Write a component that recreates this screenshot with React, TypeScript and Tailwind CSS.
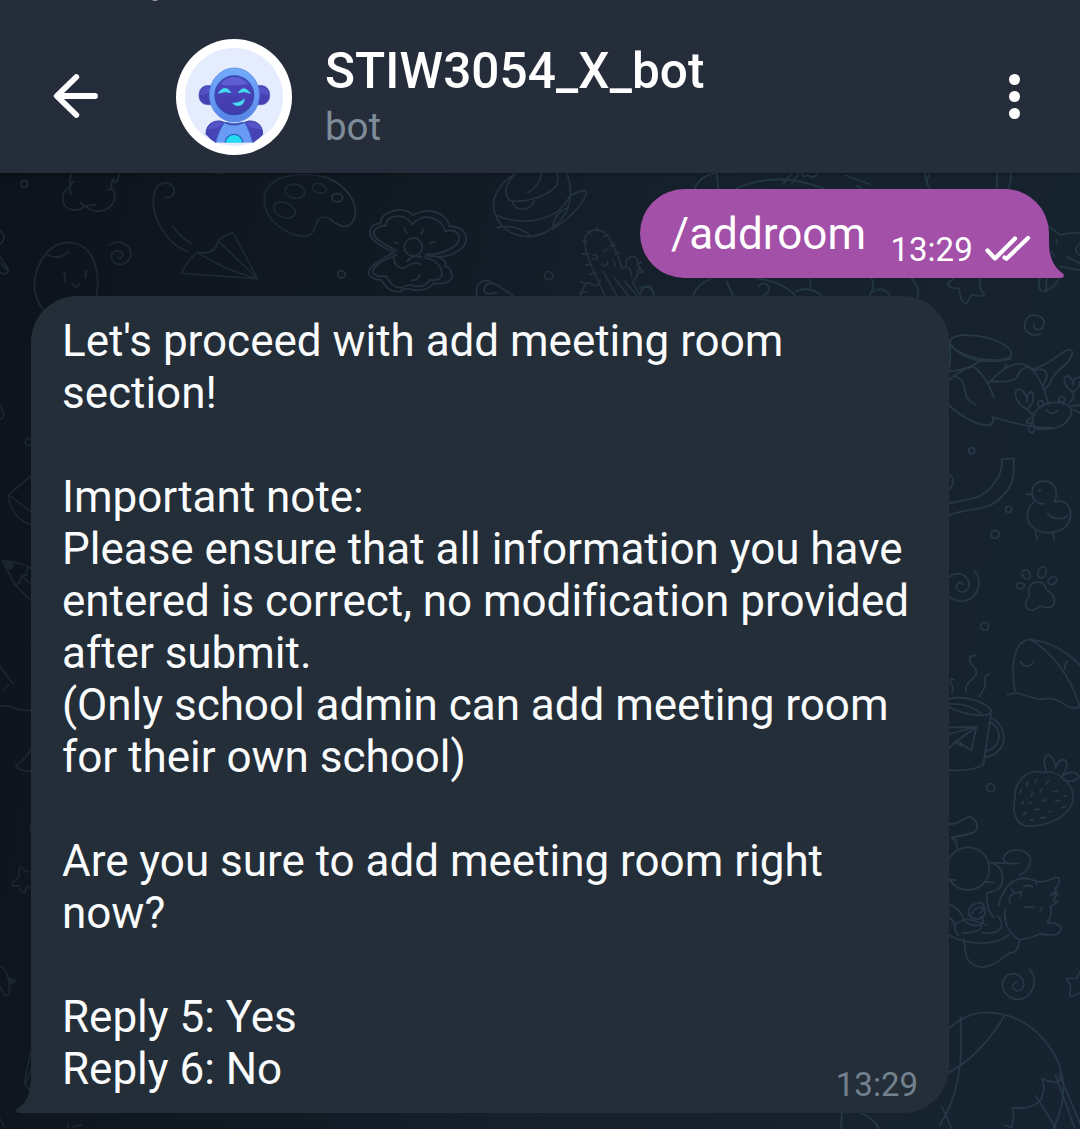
import React from "react";

function Wallpaper() {
  return (
    <svg
      className="absolute inset-0 h-full w-full"
      viewBox="0 0 1080 1129"
      fill="none"
      stroke="#263746"
      strokeWidth="5.4"
      strokeLinecap="round"
      strokeLinejoin="round"
      aria-hidden="true"
    >
      {/* top left: cloud, cherry stem, paper plane, egg, swirl, palette */}
      <g transform="translate(0 165) scale(.33333)" stroke="#1d2831">
        <circle cx="73" cy="57" r="10" />
        <path d="M212 88 Q204 45 218 20 M223 50 Q210 55 212 65 C180 75 178 130 220 135 Q245 136 256 122 Q242 118 243 112 M288 120 Q272 118 258 124 C280 145 325 145 342 108 Q350 85 335 70 Q325 78 322 72 M335 70 Q332 50 342 42 M336 52 Q358 55 356 25" />
        <path d="M0 198 Q18 210 10 223 Q5 235 0 236 M0 275 L22 308 Q30 325 8 327 L0 322 M0 292 L20 314" />
        <path d="M497 97 C518 100 530 80 518 64 C502 47 478 52 467 72 C440 145 500 240 565 260 M517 183 Q540 215 573 236" />
        <path d="M545 325 Q560 285 593 262 Q645 272 654 228 Q672 210 699 203 L773 341 Z M593 262 C650 300 710 325 773 341 L654 228" />
        <path d="M130 435 C95 390 95 335 125 285 C165 215 240 220 273 270 Q302 325 289 392 M144 270 Q180 286 205 260 M192 320 L196 348 M259 318 L256 338 M217 356 Q227 374 237 357" />
        <path d="M328 240 C365 218 397 245 391 275 C380 310 333 302 334 273 C337 254 365 253 369 268 Q365 286 352 277" />
        <path d="M990 40 C900 15 815 30 795 85 C780 150 840 200 900 213 C960 220 935 165 965 157 Q978 155 990 162" />
        <ellipse cx="885" cy="79" rx="30" ry="21" transform="rotate(10 885 79)" />
        <ellipse cx="958" cy="70" rx="21" ry="14" transform="rotate(18 958 70)" />
        <ellipse cx="853" cy="135" rx="34" ry="22" transform="rotate(22 853 135)" />
        <path d="M645 24 Q655 27 665 24" />
      </g>
      {/* top middle: palette edge, oyster, sun hat, cactus */}
      <g transform="translate(330 165) scale(.33333)" stroke="#22313d">
        <path d="M0 43 C45 60 80 110 76 145 C72 180 50 190 30 181 Q10 173 0 162" />
        <ellipse cx="22" cy="98" rx="16" ry="12" />
        <circle cx="34" cy="328" r="11" />
        <circle cx="656" cy="332" r="12" />
        <path d="M192 262 C145 240 110 220 122 190 Q130 175 152 175 C150 140 215 120 250 150 C305 120 350 150 358 183 C410 185 420 225 395 250 Q365 275 325 276 C300 272 275 270 290 280 M192 262 C150 285 105 310 118 330 Q130 345 155 345 Q175 385 210 380 Q230 365 250 375 Q290 380 310 355 Q360 360 367 335 Q365 310 345 303 Q355 290 325 276" />
        <path d="M200 258 C155 235 125 215 132 198 Q145 180 168 183 C165 150 220 140 248 179 C275 140 335 155 345 198 C390 190 395 220 378 240 Q340 270 290 268 M200 270 C145 290 125 310 130 325 Q145 338 168 333 Q185 370 215 368 Q235 355 255 364 Q290 365 300 345 Q350 350 330 305 Q310 280 290 280" />
        <circle cx="250" cy="246" r="27" />
        <path d="M193 268 C185 305 220 320 235 300 Q255 290 272 298 M232 290 Q240 270 275 275 M245 346 Q265 347 269 330 M222 188 L230 204 M279 192 L275 206 M192 231 L205 235 M299 236 L315 230" />
        <path d="M558 24 C500 60 480 110 495 145 C515 210 590 230 645 202 C720 165 735 90 710 24 M558 24 C530 55 515 80 540 107 C590 115 660 90 680 60 Q688 40 680 24 M635 24 Q630 60 595 83 M497 150 C590 190 690 160 719 93 M548 112 Q555 135 585 132 Q610 125 612 108 M501 188 Q560 175 604 215 M668 192 Q670 145 710 130 M719 93 Q740 80 765 75 C780 85 740 150 668 192" />
        <path d="M440 392 Q435 345 475 347 Q515 365 548 392 M462 375 Q465 350 490 356 M462 378 Q470 392 500 382" />
        <path d="M825 392 C795 330 750 240 768 210 Q790 185 820 200 Q850 225 876 310 Q892 310 887 290 Q895 270 917 277 Q940 310 908 353 L930 392 M810 345 Q805 370 785 358 Q765 340 752 392 M930 392 Q935 360 965 365 L972 392" />
        <path d="M820 320 L860 392 M850 335 L895 392 M885 350 L920 392 M888 305 Q905 310 905 335 M770 198 L782 208 M800 188 L804 202 M835 208 L822 215 M855 240 L840 243 M757 225 L772 230 M757 267 L777 267 M768 300 L785 298 M780 328 L797 322 M868 262 L855 268 M935 292 L920 298 M938 322 L922 322 M790 270 Q800 265 803 280 Q795 287 789 280 M822 262 Q820 250 834 255 M815 295 Q820 307 830 300 L833 290 M850 285 L856 300 M765 355 L752 350 M770 380 L750 385" />
      </g>
      {/* around the outgoing bubble */}
      <g transform="translate(640 160) scale(.33333)" stroke="#233644">
        <path d="M165 85 Q180 45 230 40 L235 85 M290 85 C380 45 470 55 550 85 M455 40 L430 72 M475 42 L455 72 M485 40 Q490 55 500 45 L520 52 L535 40 M615 45 L690 73 M650 78 L665 84 M855 40 Q855 65 870 85 M1072 40 L1070 85 M1112 40 Q1115 65 1105 85 M860 70 Q860 55 870 40" />
        <path d="M1227 200 Q1250 215 1260 225 Q1290 215 1320 220 M1235 275 Q1245 285 1240 290 M1250 240 L1250 250 M1260 320 Q1290 325 1320 330 M1280 290 L1320 310 M1320 250 Q1295 270 1320 285 M1200 355 Q1190 390 1210 395 Q1235 390 1255 360 M1220 355 L1218 395" />
        <path d="M940 355 L922 372 Q925 385 958 385 Q960 430 980 430 L995 403 Q1030 415 1033 400 Q1015 390 1022 355" />
        <path d="M160 405 Q175 370 210 358 M260 365 L280 408 M345 355 Q420 360 465 405 M355 380 Q370 360 387 380 Q385 405 370 405 M465 395 Q500 375 545 405 M510 358 L512 383 M695 355 Q705 385 690 405 M700 395 Q730 375 750 408 M815 355 Q845 390 830 420 M0 385 Q35 370 42 408 M0 325 L8 335" />
      </g>
      {/* right column: drifting hat, crab, duckling */}
      <g transform="translate(940 280) scale(.33333)">
        <path d="M302 162 C275 172 252 155 254 135 C256 105 285 98 305 113 C320 130 308 150 292 149 Q278 145 283 130" />
        <ellipse cx="122" cy="203" rx="94" ry="33" transform="rotate(12 122 203)" />
        <path d="M28 190 C60 240 140 255 214 236 M28 195 Q35 230 26 270 M22 275 Q90 270 122 240 M28 300 Q80 255 103 262 Q140 290 162 353 M48 290 Q75 300 75 335 Q80 365 107 374 M145 310 C200 250 240 240 270 262 Q310 300 325 375 M150 303 Q220 310 232 290 Q240 265 262 262 M200 255 L187 275 M272 268 Q310 260 350 230 Q395 195 397 218 Q395 235 375 255 Q340 280 330 310 L314 328 M284 270 Q330 260 318 300 L308 318 M26 375 C70 415 120 440 150 435 Q165 425 157 411 C220 430 290 445 335 443" />
        <path d="M285 445 C265 410 290 370 345 367 C400 370 405 395 380 425 Q350 455 285 445 M320 390 Q335 410 352 392 M260 388 C215 360 220 320 245 330 Q262 345 261 365 Q260 335 275 336 Q290 365 260 388 Q270 400 285 405 M399 335 C370 320 365 285 385 288 Q400 300 399 315 Q400 290 418 292 M399 335 Q405 355 388 367 M400 335 Q420 325 420 305 M272 413 Q255 420 262 430 L275 428 M278 430 Q255 455 278 459 L288 440" />
        <circle cx="302" cy="371" r="9" />
        <circle cx="365" cy="358" r="9" />
        <path d="M395 378 L420 375 M400 388 L420 400" />
        <circle cx="95" cy="512" r="9" />
        <circle cx="206" cy="688" r="9" />
        <circle cx="165" cy="763" r="12" />
        <path d="M26 583 Q45 595 38 612 Q35 625 26 627 M26 670 C90 655 120 660 155 620 Q190 580 185 538 L221 535 C225 600 215 625 175 660 C135 695 75 685 26 706" />
        <path d="M312 671 C295 675 285 660 280 655 C270 620 285 605 312 603 C350 605 355 640 343 666 C380 655 400 685 388 725 C365 770 280 770 264 720 Q257 690 280 666 M258 643 L275 642 M323 700 C345 725 375 715 383 706 M286 755 L292 778 M337 760 L343 778" />
        <circle cx="299" cy="632" r="2" />
      </g>
      {/* right column: paw, mug, whale, strawberry */}
      <g transform="translate(940 550) scale(.33333)">
        <path d="M104 63 C130 95 115 150 65 154 Q42 152 26 140 M26 82 C60 55 95 85 86 112 C75 135 45 125 50 105 Q60 90 68 103" />
        <ellipse cx="259" cy="73" rx="11" ry="15" transform="rotate(-35 259 73)" />
        <ellipse cx="306" cy="67" rx="12" ry="17" transform="rotate(20 306 67)" />
        <ellipse cx="241" cy="107" rx="12" ry="9" />
        <ellipse cx="337" cy="92" rx="14" ry="10" transform="rotate(-35 337 92)" />
        <path d="M266 123 C265 90 315 85 320 120 C345 135 350 160 335 170 Q315 175 300 168 C265 195 250 170 260 150 Q272 135 266 123" />
        <circle cx="134" cy="229" r="12" />
        <circle cx="152" cy="713" r="12" />
        <path d="M225 423 C210 340 225 275 265 268 Q350 275 420 345 M270 268 C340 310 390 380 420 470 C380 490 365 435 310 447 C260 450 240 415 203 436 M240 334 Q262 363 282 334 M382 334 Q375 340 374 355" />
        <path d="M108 316 C75 315 90 340 105 355 C125 385 70 390 78 425 M147 374 Q130 375 135 395 Q138 415 117 439 M42 388 Q28 385 32 400 Q45 415 35 430 M26 447 C75 435 135 455 153 480 Q155 500 110 495 Q60 490 26 470 M26 462 Q90 460 123 490 M153 492 L130 645 Q90 665 26 660 M153 502 C205 530 210 610 133 622 M150 515 C190 540 185 590 138 605 M26 532 L109 531 L94 602 L51 572 L26 595 M26 552 L109 531 L40 580 Q55 578 65 588" />
        <path d="M225 740 C225 690 265 655 310 668 C355 655 410 710 398 755 C380 810 310 830 260 828 C220 820 218 780 225 740 M322 668 C300 620 325 605 335 622 Q348 640 347 655 Q355 625 375 630 Q390 645 363 683 C380 660 415 665 417 682 Q405 700 370 690" />
        <path d="M264 696 L260 706 M290 688 L285 698 M326 692 L318 702 M278 726 L274 738 M306 716 L300 726 M354 723 L341 726 M244 719 L239 728 M318 749 L307 753 M358 752 L347 752 M380 736 L372 739 M274 758 L265 762 M298 777 L285 780 M335 783 L325 786 M378 770 L366 773 M258 786 L251 794 M279 809 L269 812 M316 802 L303 804 M250 755 L246 762" />
        <path d="M26 822 C60 825 65 805 90 800 C115 810 115 835 105 845 Q85 855 35 862 L50 870" />
      </g>
      {/* right column: curled cat, swirl, parasol */}
      <g transform="translate(940 830) scale(.33333)">
        <path d="M35 23 Q50 35 52 55" />
        <circle cx="84" cy="116" r="64" />
        <path d="M26 150 L45 150 M135 155 L162 158 M145 98 L237 101 M165 103 C195 120 195 165 170 180 Q140 190 140 190 Q140 245 162 263 M190 85 C200 50 265 50 272 90 Q270 120 240 135 M190 85 Q192 98 210 101 M175 228 C195 150 240 130 290 155 C330 160 345 135 357 145 Q360 165 345 175 L350 182 L333 195 L353 190 L340 210 L353 215 L330 230 Q340 250 322 278 C355 275 370 295 360 305 Q350 320 300 312 Q270 325 240 330 C210 315 190 280 195 240" />
        <path d="M250 170 Q262 163 277 170 M254 231 L280 232 M307 232 L301 242 M215 175 Q218 190 232 188 L243 185 L243 200 M232 188 Q200 195 210 218 M287 153 L290 163 M26 222 Q60 235 70 265 Q80 290 120 285 Q135 275 125 260 M26 262 Q45 270 45 300 L55 315 M45 285 Q65 265 95 270 L140 285 M85 245 Q90 220 125 218 Q140 235 120 250 M85 245 Q85 265 115 268 Q140 260 135 235 Q110 225 95 250 M70 308 Q115 310 125 290 M127 308 C180 315 200 290 172 256 M26 315 C80 345 165 350 205 315 M72 325 C75 380 80 405 125 412 C175 410 190 370 215 368 Q235 365 237 335" />
        <path d="M268 418 C300 455 275 510 230 508 C180 500 175 445 210 432 C245 425 260 460 245 478 C230 490 212 475 220 462 L230 456" />
        <path d="M420 425 L410 445 L378 446 L392 465 L389 495 Q395 503 420 488" />
        <path d="M26 597 C90 535 160 545 195 555 C280 575 355 660 367 740 Q380 810 340 897 M61 560 C70 680 60 790 0 885 M195 555 Q120 680 22 730 M367 740 L355 755 Q330 760 306 745 Q320 780 298 815 Q270 840 217 832 Q225 850 215 893 L193 885 M287 797 L350 897 M347 737 L405 897 M358 733 L420 880 M5 830 L18 855 L35 897" />
      </g>
      {/* left edge: crystal, pencil, bell, star, fish */}
      <g transform="translate(0 290) scale(.33333)" stroke="#1b252e">
        <path d="M0 345 Q8 350 5 362 Q15 370 8 383 L0 387 M93 448 Q77 440 76 457 Q78 468 93 467 M93 558 L25 615 Q60 640 93 665 M25 615 Q30 680 93 705 M8 812 L45 885 L93 932 M8 812 Q60 815 93 835 M45 885 L58 880 Q62 855 80 855 Q75 835 93 832 M65 858 L93 883 M0 1130 L40 1182 M25 1185 L10 1202" />
        <path d="M8 812 Q50 815 35 835 L20 838 Z" fill="#1b252e" />
      </g>
      <g transform="translate(0 700) scale(.33333)" stroke="#1b252e">
        <path d="M0 18 Q25 15 45 25 Q70 35 93 30 M93 145 Q75 180 48 195 Q45 210 93 215 M93 375 Q88 385 93 395 M93 515 L78 515 Q60 495 58 505 L57 532 Q35 545 36 558 L57 558 Q65 580 75 578 L80 558 L93 565 M0 800 Q15 800 25 835 L48 842 L28 855 Q30 890 15 887 L0 860 M93 1050 L73 1150 L93 1175 M78 1148 L93 1110 M0 1255 L12 1280 M205 1270 L203 1287 M220 1280 L245 1275" />
        <path d="M25 837 L48 842 L28 855 Z" fill="#1b252e" />
      </g>
      <path d="M842 1112 L841 1129 M861 1113 Q875 1119 879 1129" strokeWidth="1.8" />
    </svg>
  );
}

function BotAvatar() {
  return (
    <svg className="h-[116px] w-[116px] shrink-0" viewBox="18 14 348 348" aria-label="Bot avatar">
      <defs>
        <linearGradient id="shell" x1="0" y1="0" x2="0" y2="1">
          <stop offset="0" stopColor="#73acfc" />
          <stop offset=".5" stopColor="#6a9af6" />
          <stop offset="1" stopColor="#5683e4" />
        </linearGradient>
        <linearGradient id="face" x1="0" y1="0" x2="0" y2="1">
          <stop offset="0" stopColor="#5955cf" />
          <stop offset=".25" stopColor="#4c43bc" />
          <stop offset="1" stopColor="#403bab" />
        </linearGradient>
        <clipPath id="bust">
          <path d="M40 90 H340 V280 L278 303 Q262 317 249 325 H136 Q122 317 108 303 L40 280 Z" />
        </clipPath>
      </defs>
      <circle cx="192" cy="188" r="174" fill="#fff" />
      <circle cx="192" cy="188" r="147" fill="#e4ecfe" />
      <g clipPath="url(#bust)">
        <path d="M108 300 C108 270 128 259 150 260 L166 265 L138 325 Q120 315 108 300 Z" fill="#4743b4" stroke="#3a44a8" strokeWidth="3" />
        <path d="M278 300 C278 270 258 259 236 260 L220 265 L250 325 Q268 315 278 300 Z" fill="#4743b4" stroke="#3a44a8" strokeWidth="3" />
        <path d="M112 284 Q118 264 146 262 L160 266 Q145 285 112 284 Z M274 284 Q268 264 240 262 L228 266 Q241 285 274 284 Z" fill="#5553c8" />
        <path d="M164 264 Q192 272 224 264 Q240 290 249 330 H136 Q145 288 164 264 Z" fill="#699bf5" stroke="#3e61cd" strokeWidth="3" />
        <path d="M166 265 Q192 278 220 265" fill="none" stroke="#394faf" strokeWidth="4" />
        <circle cx="192" cy="327" r="27" fill="#24dcf2" stroke="#2861bd" strokeWidth="4" />
      </g>
      <path d="M122 154 C98 150 87 165 87 183 C87 201 99 214 122 211 Z" fill="#4540b2" stroke="#4652bd" strokeWidth="2" />
      <path d="M264 154 C288 150 299 165 299 183 C299 201 287 214 264 211 Z" fill="#4540b2" stroke="#4652bd" strokeWidth="2" />
      <path d="M90 181 Q90 157 118 155 L120 173 Q105 185 90 181 Z M296 181 Q296 157 268 155 L266 173 Q281 185 296 181 Z" fill="#5350c4" />
      <ellipse cx="193" cy="182" rx="75" ry="81" fill="url(#shell)" stroke="#5489de" strokeWidth="2.5" />
      <circle cx="193" cy="183" r="58" fill="url(#face)" stroke="#354caf" strokeWidth="4" />
      <path d="M151 149 Q190 109 234 147 Q214 155 194 152 Q169 156 151 149 Z" fill="#605dd3" />
      <path d="M145 177 Q164 148 183 175 Q164 168 145 177 Z M205 175 Q221 150 241 177 Q223 168 205 175 Z" fill="#45ddf0" stroke="#45ddf0" strokeWidth="2.5" />
      <path d="M188 206 Q209 207 223 193 Q222 216 200 214 Q191 212 188 206 Z" fill="#45ddf0" stroke="#45ddf0" strokeWidth="1.5" />
    </svg>
  );
}

function Header() {
  return (
    <header className="relative flex h-[173px] shrink-0 items-start bg-[#262d3a] pl-[52px] pr-[60px] pt-[39px] shadow-[0_1px_3px_rgba(0,0,0,0.35)]">
      <span className="absolute left-[152px] top-[-3px] h-1 w-[6px] rounded-full bg-[#9298a0]" />
      <button className="mt-[34px] h-[46px] w-[48px] shrink-0" aria-label="Back">
        <svg viewBox="0 0 48 46" className="h-[46px] w-[48px]" fill="none" stroke="#fff" strokeWidth="5.8" strokeLinecap="round" strokeLinejoin="round">
          <path d="M43 23 H5.5 M24.3 4 L4.8 23 L24.3 42" />
        </svg>
      </button>
      <div className="ml-[76px]">
        <BotAvatar />
      </div>
      <div className="ml-[33px] flex flex-1 flex-col">
        <h1 className="mt-[3px] h-[58px] whitespace-nowrap text-[49.5px] font-medium leading-[58px] tracking-[0.1px] text-white">STIW3054_X_bot</h1>
        <p className="mt-[4px] h-[46px] text-[38.5px] leading-[46px] text-[#7e8c99]">bot</p>
      </div>
      <button className="mt-[35px] flex w-[12px] flex-col items-center gap-[6px]" aria-label="More options">
        <span className="h-[11px] w-[11px] rounded-full bg-white" />
        <span className="h-[11px] w-[11px] rounded-full bg-white" />
        <span className="h-[11px] w-[11px] rounded-full bg-white" />
      </button>
    </header>
  );
}

function OutgoingMessage() {
  return (
    <div className="relative mr-[31px] flex h-[89px] w-[409px] self-end rounded-l-[45px] rounded-tr-[45px] bg-[#a350a8] pl-[31px] text-white">
      <span className="mt-[19px] h-[52px] whitespace-nowrap text-[44px] leading-[52px]">/addroom</span>
      <span className="absolute left-[250.5px] top-[41px] h-[40px] text-[33px] leading-[40px]">13:29</span>
      <svg className="absolute left-[344px] top-[45px] h-[28px] w-[48px]" viewBox="0 0 48 28" fill="none" stroke="#fff" strokeWidth="4.2" strokeLinecap="round" strokeLinejoin="round" aria-label="Read">
        <path d="M3.5 16.5 L11 24.5 L31 4.5 M20.5 23.5 L22.5 24.8 L44 4" />
      </svg>
      <svg className="absolute bottom-0 left-[408px] h-[36px] w-[17px]" viewBox="0 0 17 36" fill="#a350a8" aria-hidden="true">
        <path d="M0 0 H1 C1 14 5 25 15.5 32 Q17 35.5 13 36 H0 Z" />
      </svg>
    </div>
  );
}

const lines = [
  "Let's proceed with add meeting room",
  "section!",
  "",
  "Important note:",
  "Please ensure that all information you have",
  "entered is correct, no modification provided",
  "after submit.",
  "(Only school admin can add meeting room",
  "for their own school)",
  "",
  "Are you sure to add meeting room right",
  "now?",
  "",
  "Reply 5: Yes",
  "Reply 6: No",
];

function IncomingMessage() {
  return (
    <div className="relative ml-[31px] mt-[18px] h-[817px] w-[918px] rounded-r-[46px] rounded-tl-[46px] bg-[#232e39] pl-[31px] pt-[19px]">
      {lines.map((line, i) => (
        <p key={i} className="h-[52px] whitespace-nowrap text-[44px] leading-[52px] tracking-[-0.02px] text-[#fafbfc]">
          {line}
        </p>
      ))}
      <span className="absolute bottom-[8px] right-[31px] h-[40px] text-[33px] leading-[40px] text-[#73818e]">13:29</span>
      <svg className="absolute bottom-0 left-[-16px] h-[36px] w-[17px]" viewBox="0 0 17 36" fill="#232e39" aria-hidden="true">
        <path d="M17 0 H16 C16 14 12 27 1.5 32 Q0 35.5 4 36 H17 Z" />
      </svg>
    </div>
  );
}

export default function App() {
  return (
    <div className="relative flex h-[1129px] w-[1080px] flex-col overflow-hidden bg-[linear-gradient(100deg,#0c131a_0%,#101821_28%,#15202b_55%,#172330_100%)] font-['Roboto',sans-serif]">
      <Wallpaper />
      <Header />
      <main className="relative flex flex-1 flex-col pt-4">
        <OutgoingMessage />
        <IncomingMessage />
      </main>
    </div>
  );
}
